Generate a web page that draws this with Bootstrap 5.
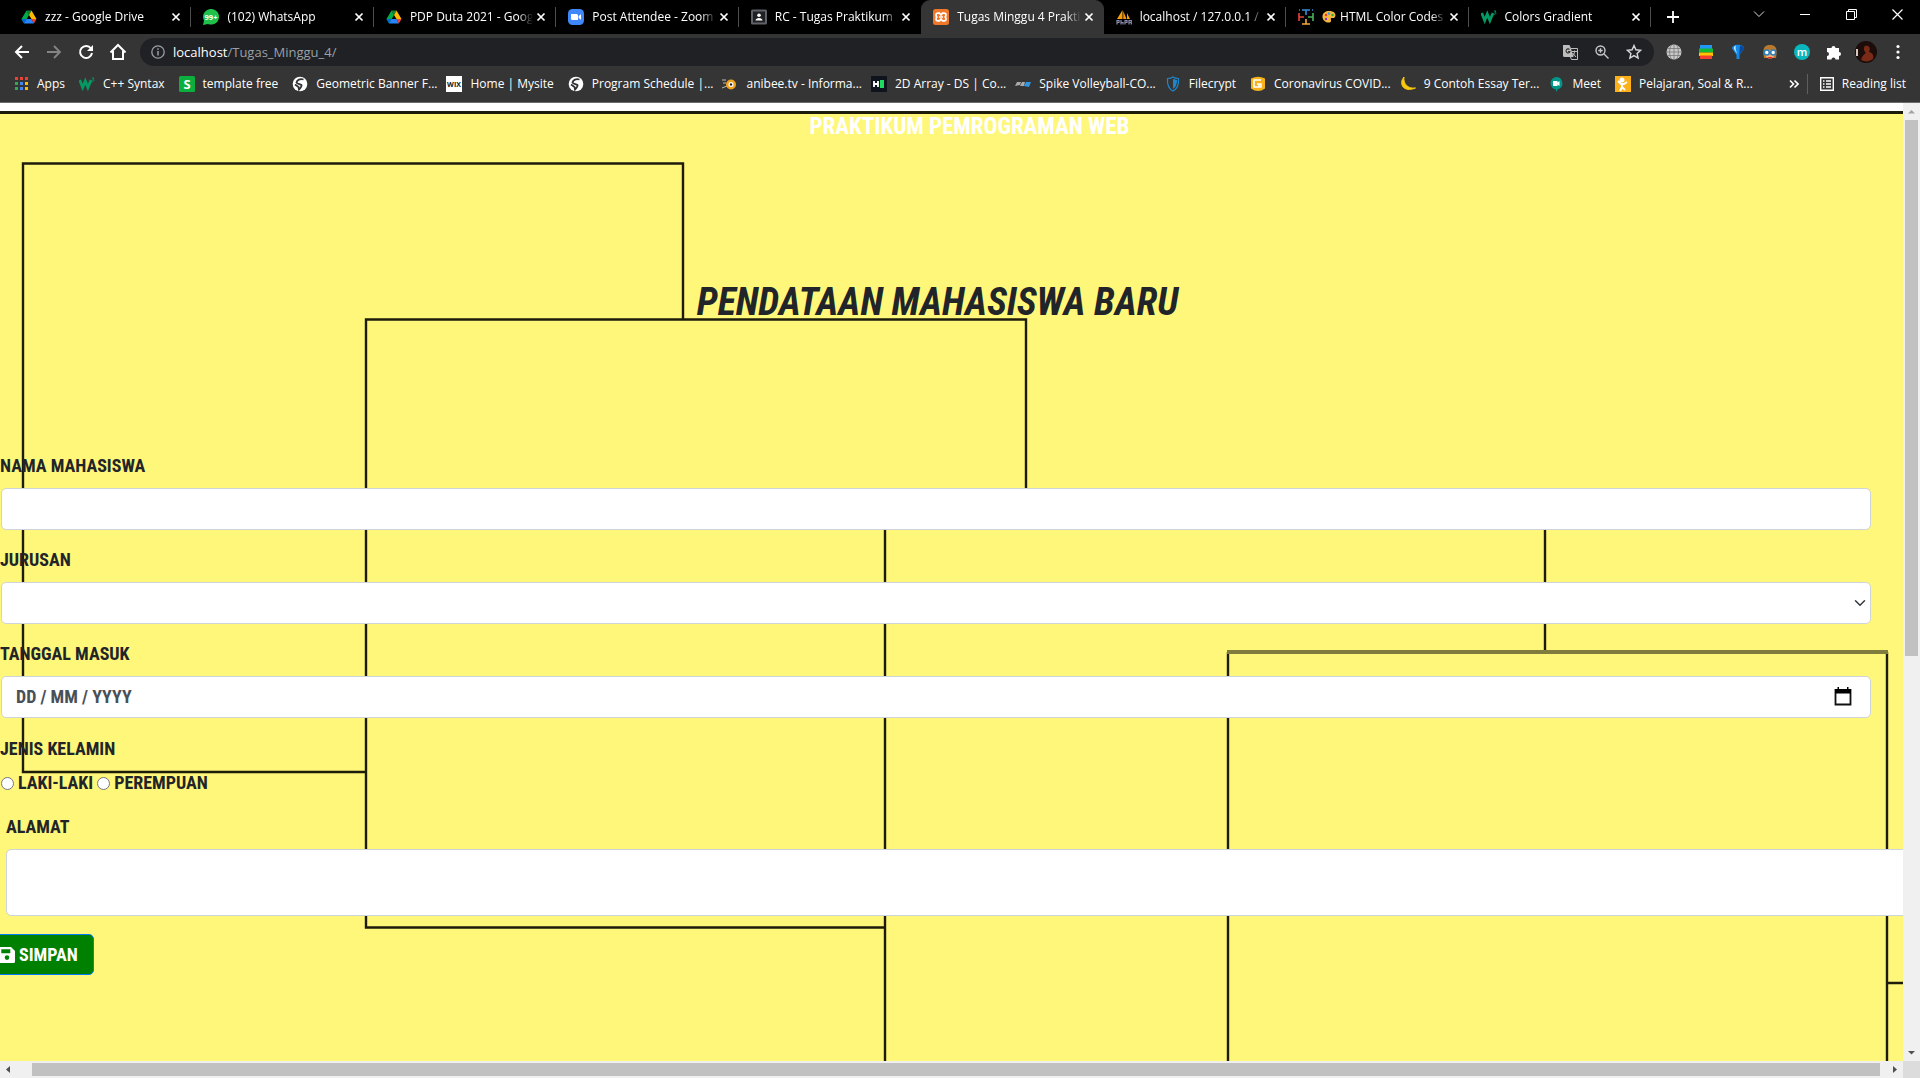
<!DOCTYPE html>
<html lang="id">
<head>
<meta charset="utf-8">
<meta name="viewport" content="width=device-width, initial-scale=1">
<title>Tugas Minggu 4 Praktikum</title>
<link href="https://cdn.jsdelivr.net/npm/bootstrap@5.3.0/dist/css/bootstrap.min.css" rel="stylesheet">
<style>
  body { font-family: "Open Sans", "Noto Sans", sans-serif; font-size: 12px; line-height: 16px; }
  svg { display: block; flex: none; }
  button.plain { background: none; border: 0; padding: 0; color: inherit; display: flex; align-items: center; justify-content: center; }
  .browser { background: #353535; color: #fff; border-bottom: 1px solid #6b6b6b; }
  .tabstrip { background: #000; height: 34px; padding-left: 9px; }
  .tabset { flex: 0 1 1642px; min-width: 0; }
  .btab { flex: 1 1 0; min-width: 0; height: 34px; padding: 0 7px 0 12px; color: #fff; text-decoration: none; position: relative; }
  .btab::after { content: ""; position: absolute; right: 0; top: 7px; height: 20px; width: 1px; background: #4d4d4d; }
  .btab.on { background: #353535; border-radius: 9px 9px 0 0; }
  .btab.on::after, .btab.quiet::after { display: none; }
  .tabname { flex: 1; min-width: 0; overflow: hidden; white-space: nowrap; margin-left: 8px; color: #fff; text-decoration: none;
    -webkit-mask-image: linear-gradient(90deg, #000 88%, transparent); mask-image: linear-gradient(90deg, #000 88%, transparent); }
  .slot { width: 32px; height: 32px; }
  .wslot { width: 46px; height: 28px; }
  .plus { width: 44px; height: 34px; }
  .toolbar { height: 36px; padding: 0 6px; }
  .omni { height: 28px; border-radius: 14px; background: #202124; color: #9aa0a6; font-size: 13px; margin: 0 4px 0 6px; padding: 0 4px 0 11px; min-width: 0; }
  .omni b { color: #fff; font-weight: 400; }
  .marks { height: 32px; padding: 0 14px 4px 13px; }
  .mark-row { gap: 14px; min-width: 0; }
  .bm { color: #fff; text-decoration: none; white-space: nowrap; gap: 8px; }
  .bm.long { margin-right: -5px; }
  .vrule { width: 1px; height: 20px; background: #5f5f5f; }

  .stage { min-height: 0; }
  .sheet { background: #fff; padding-top: 8px; overflow: hidden; min-width: 0; }
  .canvas { background: #fff779; position: relative; height: 100%; color: #212529; font-family: "Liberation Sans Narrow", "Roboto Condensed", "Roboto", sans-serif; font-weight: 700; font-size: 18px; line-height: 24px; text-transform: uppercase; }
  .lines { position: absolute; inset: 0; width: 100%; height: 100%; }
  .content { position: relative; }
  .course { font-size: 23px; line-height: 32px; font-weight: 700; color: #fff; padding-left: 36px; margin: 0; }
  .maintitle { font-size: 38px; line-height: 48px; font-weight: 700; font-style: italic; padding-right: 28px; margin: 135px 0 0; }
  .entry { margin-top: 126px; }
  .fieldset-w { padding-right: 32px; }
  .fld { margin: 0 0 16px 1px; }
  .fld label.cap { margin: 0 0 8px -1px; display: block; line-height: 28px; }
  .box { height: 42px; border: 1px solid #ced4da; border-radius: 5px; background-color: #fff; color: #495057; font: inherit; padding: 0 14px; }
  .box:focus-within { border-color: #ced4da; }
  .box input { border: 0; outline: 0; background: none; font: inherit; color: inherit; padding: 0; }
  select.box { background-position: right 4px center; background-size: 12px 12px; }
  .sex { padding-top: 3px; }
  .sex-row { padding: 10px 0 0 1px; }
  .rad { width: 13px; height: 13px; margin: 0 4px 0 0; }
  .area { height: 67px; resize: both; }
  .alamat { margin: 20px -11px 0 6px; }
  .alamat label { display: block; margin-bottom: 10px; }
  .save { background: #008000; border: 1px solid #007bff; border-radius: 5px; color: #fff; font: inherit; text-transform: inherit; height: 41px; padding: 0 15px; margin: 18px 0 0 -17px; gap: 4px; }

  .vbar { width: 17px; background: #f0f0f0; }
  .hbar { height: 17px; background: #f0f0f0; }
  .vbar .grip { width: 13px; flex: 0 0 56%; background: #c1c1c1; }
  .hbar .grip { height: 13px; background: #c1c1c1; margin-left: 15px; margin-right: 6px; }
  .corner { width: 17px; height: 17px; background: #dcdcdc; }
  .arrow { width: 17px; height: 17px; }
</style>
</head>
<body class="vh-100 d-flex flex-column overflow-hidden">

<svg width="0" height="0" class="position-absolute" aria-hidden="true">
  <defs>
    <symbol id="drive" viewBox="0 0 16 16"><path d="M5.5 1.5h5L8 6z" fill="#188038"/><path d="M5.5 1.5 8 6 3.1 14.5.5 10z" fill="#00ac47"/><path d="M10.5 1.5 15.5 10h-5L8 6z" fill="#ffba00"/><path d="M5.6 10H.5l2.6 4.5z" fill="#0066da"/><path d="M5.6 10h4.9l2.4 4.5H3.1z" fill="#2684fc"/><path d="M10.5 10h5l-2.6 4.5z" fill="#ea4335"/></symbol>
    <symbol id="x" viewBox="0 0 16 16"><path d="m4.5 4.5 7 7m0-7-7 7" stroke="#fff" stroke-width="1.7"/></symbol>
    <symbol id="w3" viewBox="0 0 16 16"><path d="m.7 4 3 7.500L6.300 5l2.600 6.500L12 4" fill="none" stroke="#059862" stroke-width="2.800"/><path d="M12.800 2h2.200l-1.200 1.500c1.600 0 1.600 2-.8 1.800" fill="none" stroke="#059862" stroke-width=".9"/></symbol>
    <symbol id="globe" viewBox="0 0 16 16"><circle cx="8" cy="8" r="7.300" fill="#fff"/><path d="M11.500 3.500C8 2.500 5 4 4.500 6.500 5 8 8 8 9.500 9c.5 1.500-1 3-2.500 4.500L6.500 11 3 8.500" fill="none" stroke="#303236" stroke-width="1.800"/></symbol>
  </defs>
</svg>

<header class="browser">
  <div class="tabstrip d-flex">
    <div class="tabset d-flex">
      <div class="btab d-flex align-items-center"><svg width="16" height="16"><use href="#drive"/></svg><a class="tabname" href="#">zzz - Google Drive</a><button class="plain" aria-label="Tutup"><svg width="16" height="16"><use href="#x"/></svg></button></div>
      <div class="btab d-flex align-items-center"><svg width="16" height="16" viewBox="0 0 16 16"><path d="M0 16l1-4.500A8 7.800 0 1 1 5 15z" fill="#1fc14b"/><text x="8" y="11" text-anchor="middle" font-size="7.500" font-weight="700" fill="#fff">99+</text></svg><a class="tabname" href="#">(102) WhatsApp</a><button class="plain" aria-label="Tutup"><svg width="16" height="16"><use href="#x"/></svg></button></div>
      <div class="btab d-flex align-items-center"><svg width="16" height="16"><use href="#drive"/></svg><a class="tabname" href="#">PDP Duta 2021 - Goog</a><button class="plain" aria-label="Tutup"><svg width="16" height="16"><use href="#x"/></svg></button></div>
      <div class="btab d-flex align-items-center"><svg width="16" height="16" viewBox="0 0 16 16"><rect width="16" height="16" rx="4.500" fill="#4087fc"/><path d="M3 5h5.500q1.500 0 1.500 1.500V11H4.500Q3 11 3 9.500zM10.600 7 13 5.200v5.600L10.600 9z" fill="#fff"/></svg><a class="tabname" href="#">Post Attendee - Zoom</a><button class="plain" aria-label="Tutup"><svg width="16" height="16"><use href="#x"/></svg></button></div>
      <div class="btab quiet d-flex align-items-center"><svg width="16" height="16" viewBox="0 0 16 16"><rect width="16" height="15" y=".5" rx="1.500" fill="#5f6368"/><rect x="2" y="2.500" width="12" height="11" fill="#202124"/><circle cx="8" cy="6.200" r="1.800" fill="#fff"/><path d="M4.500 11.500c0-3.500 7-3.500 7 0z" fill="#fff"/></svg><a class="tabname" href="#">RC - Tugas Praktikum</a><button class="plain" aria-label="Tutup"><svg width="16" height="16"><use href="#x"/></svg></button></div>
      <div class="btab on d-flex align-items-center"><svg width="16" height="16" viewBox="0 0 16 16"><rect width="16" height="16" rx="2.500" fill="#f0782a"/><path d="M5 4.200h1.500L8 6l1.500-1.800H11q2 0 2 1.800T11.500 8q1.500 0 1.500 2t-2 1.800H9.500L8 10l-1.500 1.800H5q-2 0-2-1.800T4.500 8Q3 8 3 6t2-1.800zM6 8h4" fill="none" stroke="#fff" stroke-width="1.700"/></svg><a class="tabname" href="#">Tugas Minggu 4 Prakti</a><button class="plain" aria-label="Tutup"><svg width="16" height="16"><use href="#x"/></svg></button></div>
      <div class="btab d-flex align-items-center"><svg width="16" height="16" viewBox="0 0 16 16"><path d="M1 10 6.500 1v9zM7.300 10V2l3.200 8zM11 10V4l3 6z" fill="#f89c0e"/><path d="M1 15.500v-4h2v2H1M5 11v4.500m0-2h2v2M9 15.500v-4h2v2H9m4 2v-4h2.300v4m-2.300-2h2" fill="none" stroke="#8a8cae" stroke-width="1.200"/></svg><a class="tabname" href="#">localhost / 127.0.0.1 /</a><button class="plain" aria-label="Tutup"><svg width="16" height="16"><use href="#x"/></svg></button></div>
      <div class="btab d-flex align-items-center"><svg width="16" height="16" viewBox="0 0 16 16" fill="none" stroke-width="1.600"><path d="M4 1h8M8 1v5M1 1h1m12 0h1" stroke="#3b8ad8"/><path d="M1 4v8M1 8h5" stroke="#e5443c"/><path d="M15 4v8M15 8h-5" stroke="#46b35c"/><path d="M4 15h8M8 15v-5" stroke="#f2a93b"/></svg><a class="tabname d-flex gap-1 align-items-center" href="#"><svg width="14" height="14" viewBox="0 0 14 14"><path d="M7 1c9 0 7 8 3.500 7C8 7.500 9 9 9 11c0 3-9 2-8.500-5C.8 3 3.500 1 7 1z" fill="#f6b73c"/><circle cx="4" cy="5" r="1.200" fill="#e33"/><circle cx="7" cy="3.500" r="1.200" fill="#2a9df4"/><circle cx="10.500" cy="5" r="1.200" fill="#3a3"/><circle cx="4" cy="9" r="1.200" fill="#83c"/></svg>HTML Color Codes</a><button class="plain" aria-label="Tutup"><svg width="16" height="16"><use href="#x"/></svg></button></div>
      <div class="btab d-flex align-items-center"><svg width="16" height="16"><use href="#w3"/></svg><a class="tabname" href="#">Colors Gradient</a><button class="plain" aria-label="Tutup"><svg width="16" height="16"><use href="#x"/></svg></button></div>
    </div>
    <button class="plain plus" aria-label="Tab baru"><svg width="14" height="14" viewBox="0 0 14 14"><path d="M7 1v12M1 7h12" stroke="#fff" stroke-width="1.800"/></svg></button>
    <div class="d-flex ms-auto">
      <button class="plain wslot" aria-label="Cari tab"><svg width="12" height="12" viewBox="0 0 12 12"><path d="m1 3.500 5 5 5-5" fill="none" stroke="#ddd"/></svg></button>
      <button class="plain wslot" aria-label="Kecilkan"><svg width="10" height="10" viewBox="0 0 10 10"><path d="M0 5.500h10" stroke="#fff"/></svg></button>
      <button class="plain wslot" aria-label="Pulihkan"><svg width="11" height="11" viewBox="0 0 11 11" fill="none" stroke="#fff"><path d="M.5 2.500h8v8h-8zM2.500 2.500v-2h8v8h-2"/></svg></button>
      <button class="plain wslot" aria-label="Tutup jendela"><svg width="11" height="11" viewBox="0 0 11 11"><path d="m.5.5 10 10m0-10-10 10" stroke="#fff" stroke-width="1.200"/></svg></button>
    </div>
  </div>

  <div class="toolbar d-flex align-items-center">
    <button class="plain slot" aria-label="Kembali"><svg width="16" height="16" viewBox="0 0 16 16" fill="none" stroke="#fff" stroke-width="2"><path d="M15 8H2m6-6L2 8l6 6"/></svg></button>
    <button class="plain slot" aria-label="Maju"><svg width="16" height="16" viewBox="0 0 16 16" fill="none" stroke="#858585" stroke-width="1.800"><path d="M1 8h13M8 2l6 6-6 6"/></svg></button>
    <button class="plain slot" aria-label="Muat ulang"><svg width="16" height="16" viewBox="0 0 16 16"><path d="M13 4.500A6 6 0 1 0 14 9" fill="none" stroke="#fff" stroke-width="2"/><path d="M15 1v6H9z" fill="#fff"/></svg></button>
    <button class="plain slot" aria-label="Beranda"><svg width="18" height="18" viewBox="0 0 18 18"><path d="M1.500 9.500 9 2l7.500 7.500M4 8v8h10V8" fill="none" stroke="#fff" stroke-width="2"/></svg></button>
    <div class="omni d-flex align-items-center flex-fill">
      <svg width="14" height="14" viewBox="0 0 14 14"><circle cx="7" cy="7" r="6.200" fill="none" stroke="#9aa0a6" stroke-width="1.300"/><path d="M7 6v4.500M7 3.300v1.500" stroke="#9aa0a6" stroke-width="1.500"/></svg>
      <span class="ms-2 flex-fill"><b>localhost</b>/Tugas_Minggu_4/</span>
      <button class="plain slot" aria-label="Terjemahkan"><svg width="15" height="15" viewBox="0 0 15 15"><path d="M0 0h6.500l1.500 3.500L10.500 12H1.500Q0 12 0 10.500z" fill="#bdbdbd"/><path d="M8 3.500h6.500v11H8.500L7.500 12M9 6.500h5m-2.500-1v1c0 2-1 3.500-2 4.500m0-3 3.500 4" fill="none" stroke="#bdbdbd"/><path d="M6.500 4.500a2 2 0 1 0 .5 2H5" fill="none" stroke="#333" stroke-width="1.100"/></svg></button>
      <button class="plain slot" aria-label="Perbesar"><svg width="14" height="14" viewBox="0 0 14 14" fill="none" stroke="#c6c8ca" stroke-width="1.400"><circle cx="5.500" cy="5.500" r="4.500"/><path d="m9 9 4.500 4.500M5.500 3.300v4.400M3.300 5.500h4.400"/></svg></button>
      <button class="plain slot" aria-label="Tandai"><svg width="16" height="16" viewBox="0 0 16 16"><path d="m8 1.500 1.900 4.300 4.700.5-3.500 3.100 1 4.600L8 11.600 3.900 14l1-4.600L1.400 6.300l4.700-.5z" fill="none" stroke="#d6d8da" stroke-width="1.400"/></svg></button>
    </div>
    <button class="plain slot" aria-label="Ekstensi globe"><svg width="16" height="16" viewBox="0 0 16 16"><circle cx="8" cy="8" r="7.500" fill="#c9c9c9"/><path d="M8 0v16M.5 8h15M1.500 4.500h13M1.500 11.500h13M5.500 1C3 4 3 12 5.500 15M10.500 1c2.500 3 2.500 11 0 14" stroke="#777" stroke-width=".8" fill="none"/></svg></button>
    <button class="plain slot" aria-label="Ekstensi buku"><svg width="14" height="14" viewBox="0 0 14 14"><path fill="#2196f3" d="M1 0h12v4H1z"/><path fill="#0fb836" d="M0 3.500h14v4H0z"/><path fill="#ffc400" d="M0 7.500h14v3.500H0z"/><path fill="#f4402f" d="M1 10.500h12V14H1z"/></svg></button>
    <button class="plain slot" aria-label="Ekstensi balon"><svg width="14" height="16" viewBox="0 0 14 16"><path d="M1 4.500C1-.5 13-.5 13 4.500L8.500 11v4h-3v-4z" fill="#1489e8"/><path d="M5 1.500c-1.500 3 1 7 1.500 9L3 5c-.5-2 .5-3 2-3.500z" fill="#c9edff"/><path d="M9 1.500 8 11l5-6.500C13 3 11 1.500 9 1.500z" fill="#07489d"/></svg></button>
    <button class="plain slot" aria-label="Ekstensi wajah"><svg width="16" height="16" viewBox="0 0 16 16"><path d="M2 14C0 3 3 1 8 1s8 2 6 13z" fill="#b8782e"/><path d="M3.500 6h9v5c-1 5-8 5-9 0z" fill="#f0b27a"/><path d="M5 13h6l-3 2z" fill="#e22"/><g fill="#fff" stroke="#2f7fb8" stroke-width="1.600"><circle cx="4.800" cy="8.500" r="2.500"/><circle cx="11.200" cy="8.500" r="2.500"/></g></svg></button>
    <button class="plain slot" aria-label="Ekstensi m"><svg width="16" height="16" viewBox="0 0 16 16"><circle cx="8" cy="8" r="8" fill="#08b7bd"/><text x="8" y="11.500" text-anchor="middle" font-size="11" font-weight="600" fill="#fff">m</text></svg></button>
    <button class="plain slot" aria-label="Ekstensi"><svg width="16" height="16" viewBox="0 0 16 16"><path d="M1 4h4.500a2 2 0 1 1 4 0H13v4a2 2 0 1 1 0 4v3.500H9.500a2 2 0 1 0-4 0H1V12a2 2 0 1 0 0-4z" fill="#fff"/></svg></button>
    <button class="plain slot" aria-label="Profil"><svg width="22" height="22" viewBox="0 0 22 22"><circle cx="11" cy="11" r="11" fill="#1c0d0b"/><path d="M10 5c4-1 6 2 4 6 4 1 5 4 4 7-4 3-8 3-12 1 1-4 3-6 5-7-2-2-3-5-1-7z" fill="#7a2b18"/><path d="M1 8h2v7H1z" fill="#d8c8bf"/></svg></button>
    <button class="plain slot" aria-label="Menu"><svg width="4" height="16" viewBox="0 0 4 16" fill="#fff"><circle cx="2" cy="2.500" r="1.600"/><circle cx="2" cy="8" r="1.600"/><circle cx="2" cy="13.500" r="1.600"/></svg></button>
  </div>

  <nav class="marks d-flex align-items-center">
    <div class="mark-row d-flex">
      <a class="bm d-flex align-items-center" href="#"><svg width="16" height="16" viewBox="0 0 16 16"><path fill="#ea4335" d="M2 1h3v3H2zM7 1h3v3H7zM12 1h3v3h-3z"/><path fill="#34a853" d="M2 6h3v3H2zM2 11h3v3H2z"/><path fill="#4285f4" d="M7 6h3v3H7zM7 11h3v3H7z"/><path fill="#fbbc05" d="M12 6h3v3h-3zM12 11h3v3h-3z"/></svg>Apps</a>
      <a class="bm d-flex align-items-center" href="#"><svg width="16" height="16"><use href="#w3"/></svg>C++ Syntax</a>
      <a class="bm d-flex align-items-center" href="#"><svg width="16" height="16" viewBox="0 0 16 16"><rect width="16" height="16" rx="1.500" fill="#0cae3e"/><text x="8" y="13" text-anchor="middle" font-size="13" font-weight="700" fill="#fff">S</text></svg>template free</a>
      <a class="bm long d-flex align-items-center" href="#"><svg width="16" height="16"><use href="#globe"/></svg>Geometric Banner F...</a>
      <a class="bm d-flex align-items-center" href="#"><svg width="16" height="16" viewBox="0 0 16 16"><path fill="#fff" d="M0 0h16v16H0z"/><text x="8" y="10.500" text-anchor="middle" font-size="7" font-weight="700" fill="#111">WIX</text></svg>Home | Mysite</a>
      <a class="bm long d-flex align-items-center" href="#"><svg width="16" height="16"><use href="#globe"/></svg>Program Schedule |...</a>
      <a class="bm long d-flex align-items-center" href="#"><svg width="16" height="16" viewBox="0 0 16 16"><path d="M0 4h4M1 7h3M0 12l5-2" stroke="#bbb"/><circle cx="9" cy="8.500" r="5" fill="#f0a01c"/><circle cx="9" cy="8.500" r="2.500" fill="#fff"/><circle cx="9" cy="8.500" r="1.200" fill="#222"/></svg>anibee.tv - Informa...</a>
      <a class="bm long d-flex align-items-center" href="#"><svg width="16" height="16" viewBox="0 0 16 16"><path fill="#0e141e" d="M0 0h16v16H0z"/><path d="M3 5v6m4-6v6M3 8h4" stroke="#fff" stroke-width="1.800"/><path fill="#1fdb60" d="M9 4h4v8H9z"/></svg>2D Array - DS | Co...</a>
      <a class="bm long d-flex align-items-center" href="#"><svg width="16" height="16" viewBox="0 0 16 16"><path d="M0 10 2 6h4L5 9zM5 10l2-4h3l-1 4z" fill="#aaa"/><path d="m9 10 2-4h5l-2 5z" fill="#3295e0"/></svg>Spike Volleyball-CO...</a>
      <a class="bm d-flex align-items-center" href="#"><svg width="16" height="16" viewBox="0 0 16 16"><path d="M8 1c2 1.500 4 1.500 5.500 1.500C14 9 12 13 8 15 4 13 2 9 2.500 2.500 4 2.500 6 2.500 8 1z" fill="none" stroke="#1e86cc" stroke-width="1.200"/><path d="M8 3v10c3-2 4-5 4-9z" fill="#1e86cc"/></svg>Filecrypt</a>
      <a class="bm long d-flex align-items-center" href="#"><svg width="16" height="16" viewBox="0 0 16 16"><path d="M1 2.500Q8-1 15 2.500v10Q8 17.500 1 12.500z" fill="#f6b21b"/><path d="M11 4H4v7h7V8H7M9 8v3" fill="none" stroke="#fff" stroke-width="1.600"/></svg>Coronavirus COVID...</a>
      <a class="bm long d-flex align-items-center" href="#"><svg width="16" height="16" viewBox="0 0 16 16"><path d="M4 1C-2 8 4 17 15.500 12 8 13 3 8 4 1z" fill="#f9c80e" stroke="#f9c80e"/></svg>9 Contoh Essay Ter...</a>
      <a class="bm d-flex align-items-center" href="#"><svg width="16" height="16" viewBox="0 0 16 16"><path d="M8 1a6.300 6.300 0 0 1 2 12.300L8 16v-2.500A6.300 6.300 0 0 1 8 1z" fill="#009688"/><path d="M5 5h4.500v1.500L11.500 5v5l-2-1.500V10H5z" fill="#fff"/></svg>Meet</a>
      <a class="bm long d-flex align-items-center" href="#"><svg width="16" height="16" viewBox="0 0 16 16"><path fill="#fbb117" d="M0 0h16v16H0z"/><circle cx="7" cy="4" r="2.500" fill="#fff"/><path d="m3 5 3 3h3l3-2M7 7v4l-2 4m2-4 3 3" stroke="#fff" stroke-width="2" fill="none"/></svg>Pelajaran, Soal &amp; R...</a>
    </div>
    <div class="d-flex align-items-center ms-auto gap-2">
      <button class="plain" aria-label="Bookmark lainnya"><svg width="10" height="10" viewBox="0 0 10 10"><path d="m1 1.500 3.500 3.500L1 8.500m4.500-7L9 5 5.500 8.500" fill="none" stroke="#fff" stroke-width="1.600"/></svg></button>
      <span class="vrule"></span>
      <a class="bm d-flex align-items-center ms-1" href="#"><svg width="14" height="14" viewBox="0 0 14 14" fill="none" stroke="#fff" stroke-width="1.400"><path d="M.7.7h12.600v12.600H.7zM3 4h1.500M6 4h5M3 7h1.500M6 7h5M3 10h1.500M6 10h5"/></svg>Reading list</a>
    </div>
  </nav>
</header>

<div class="stage d-flex flex-fill">
  <main class="sheet flex-fill">
    <div class="canvas">
      <svg class="lines" fill="none" stroke="#1d1c0b" stroke-width="2.400" aria-hidden="true">
        <path d="M0 1.500h2400" stroke-width="3"/>
        <path d="M366 661H23V52.500h660v156"/>
        <path d="M885 816.500H366v-608h660v192"/>
        <path d="M885 1000V400h660v140"/>
        <path d="M1228 1000V541M1887 541v459M1887 872h500"/>
        <path d="M1227 541h661" stroke="#807c3d" stroke-width="4"/>
      </svg>
      <div class="content">
        <h4 class="course text-center">Praktikum Pemrograman Web</h4>
        <h1 class="maintitle text-center">Pendataan Mahasiswa Baru</h1>
        <form class="entry">
          <div class="fieldset-w">
            <div class="fld"><label class="cap" for="nama">Nama Mahasiswa</label><input class="box form-control" id="nama" type="text"></div>
            <div class="fld"><label class="cap" for="jurusan">Jurusan</label><select class="box form-select" id="jurusan"><option></option></select></div>
            <div class="fld"><label class="cap" for="tgl">Tanggal Masuk</label>
              <div class="box d-flex align-items-center"><input class="flex-fill" id="tgl" type="text" value="DD / MM / YYYY"><button type="button" class="plain me-1" aria-label="Pilih tanggal"><svg width="18" height="20" viewBox="0 0 18 20"><path d="M1.500 3h15v14.500h-15z" fill="none" stroke="#111" stroke-width="1.800"/><path d="M1 2h16v4.500H1zM3.500 0h1.500v3H3.500zM13 0h1.500v3H13z" fill="#000"/></svg></button></div>
            </div>
            <div class="sex" role="group" aria-labelledby="jk">
              <div id="jk">Jenis Kelamin</div>
              <div class="sex-row d-flex">
                <label class="d-flex align-items-center me-1"><input class="rad" type="radio" name="jk">Laki-laki</label>
                <label class="d-flex align-items-center"><input class="rad" type="radio" name="jk">Perempuan</label>
              </div>
            </div>
          </div>
          <div class="alamat"><label for="alamat">Alamat</label><textarea class="box area form-control" id="alamat"></textarea></div>
          <button type="button" class="save d-flex align-items-center"><svg width="16" height="16" viewBox="0 0 16 16"><path fill="#fff" fill-rule="evenodd" d="M1.500 0H12l4 4v10.500Q16 16 14.500 16h-13Q0 16 0 14.500v-13Q0 0 1.500 0zM2.300 2.300v4h9v-4zM8 8.300a2.300 2.300 0 1 0 0 4.600 2.300 2.300 0 0 0 0-4.600z"/></svg>Simpan</button>
        </form>
      </div>
    </div>
  </main>
  <div class="vbar d-flex flex-column align-items-center" aria-hidden="true">
    <svg class="arrow" viewBox="0 0 17 17"><path d="M5 10.500h7L8.500 7z" fill="#a3a3a3"/></svg>
    <div class="grip"></div>
    <svg class="arrow mt-auto" viewBox="0 0 17 17"><path d="M5 7h7l-3.500 3.500z" fill="#505050"/></svg>
  </div>
</div>
<div class="d-flex" aria-hidden="true">
  <div class="hbar d-flex align-items-center flex-fill">
    <svg class="arrow" viewBox="0 0 17 17"><path d="M10 5v7L6 8.500z" fill="#505050"/></svg>
    <div class="grip flex-fill"></div>
    <svg class="arrow" viewBox="0 0 17 17"><path d="M7 5v7l4-3.500z" fill="#505050"/></svg>
  </div>
  <div class="corner"></div>
</div>
<script src="https://cdn.jsdelivr.net/npm/bootstrap@5.3.0/dist/js/bootstrap.bundle.min.js"></script>
</body>
</html>
